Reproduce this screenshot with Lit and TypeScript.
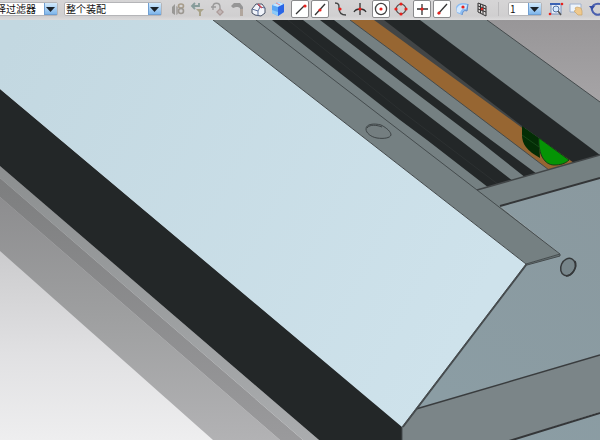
import { LitElement, html, css, svg, SVGTemplateResult } from "lit";
import { customElement } from "lit/decorators.js";
import { classMap } from "lit/directives/class-map.js";

interface Tool {
  label: string;
  pressed?: boolean;
  muted?: boolean;
  art: SVGTemplateResult;
}

const dot = (x: number, y: number, r = 1.6) =>
  svg`<circle cx=${x} cy=${y} r=${r} fill="#e8201c"/>`;

const assemblyTools: Tool[] = [
  { label: "装配约束", muted: true, art: svg`<path d="M3 7l3-3v11l-3-2z" fill="#8b8b88"/><path d="M7 6l2 1v7l-2 1z" fill="#a3a19e"/><ellipse cx="12" cy="6" rx="2.500" ry="2" fill="none" stroke="#9c8f78" stroke-width="1.6"/><ellipse cx="12" cy="11" rx="2.500" ry="2.500" fill="none" stroke="#8f8a82" stroke-width="1.6"/>` },
  { label: "返回过滤", muted: true, art: svg`<path d="M10 3v3H4M6 3L3 6l3 3" fill="none" stroke="#748f8d" stroke-width="1.8"/><path d="M7 9h8l-3 3v4h-2v-4z" fill="#a09878"/>` },
  { label: "移动组件", muted: true, art: svg`<path d="M4 7c0-5 7-5 7 0v2M2 7h5M4 5v5" fill="none" stroke="#8c8c8c" stroke-width="1.3"/><path d="M11 8l4 4-4 4-4-4z" fill="#a48f8d"/><path d="M11 10v4M9 12h4" stroke="#c9bfbe"/>` },
  { label: "装配工具", muted: true, art: svg`<path d="M2 6l3-3h6l3 4v4h-3V8L9 7H7L4 8z" fill="#878787"/><path d="M11 9h3v7h-3z" fill="#aa9c91"/>` },
  { label: "线框显示", art: svg`<path d="M3 9l4-5h6l3 4v5l-4 3-6-1-3-2z" fill="#f1f4fa" stroke="#465064"/><path d="M3 9l6 2v5M9 11l2-4 5 1M11 7L8 4" fill="none" stroke="#5c6e98"/><path d="M9 4l4 4" stroke="#d74b54" stroke-width="1.3"/>` },
  { label: "着色显示", art: svg`<path d="M3 5l7-3 5 2v8l-6 4-6-3z" fill="#5ba6f4"/><path d="M3 5l7-3 5 2-6 3z" fill="#c4e6ff"/><path d="M9 7l6-3v8l-6 4z" fill="#2b66e6"/><path d="M3 10l6 2v4l-6-3z" fill="#8ccaf8"/><path d="M7 3l4 2" stroke="#e08793"/>` },
];

const snapTools: Tool[] = [
  { label: "端点", pressed: true, art: svg`<path d="M5 14L13 6" stroke="#333" stroke-width="1.3"/>${dot(14, 6)}` },
  { label: "中点", pressed: true, art: svg`<path d="M4 15L14 4" stroke="#333" stroke-width="1.3"/>${dot(9, 10)}` },
  { label: "控制点", art: svg`<path d="M4 3C8 3 8 5 8 8C8 13 10 15 15 15" fill="none" stroke="#444" stroke-width="1.4"/>${dot(9, 9)}` },
  { label: "交点", art: svg`<path d="M3 12C5 8 13 8 15 12M9 3v12" fill="none" stroke="#333" stroke-width="1.3"/>${dot(9, 9)}` },
];

const arcTools: Tool[] = [
  { label: "圆弧中心", pressed: true, art: svg`<circle cx="9" cy="9" r="5.6" fill="none" stroke="#444" stroke-width="1.3"/>${dot(9, 9)}` },
  { label: "象限点", art: svg`<circle cx="9" cy="9" r="4.8" fill="none" stroke="#555" stroke-width="1.3"/>${dot(9, 4)}${dot(9, 14)}${dot(4, 9)}${dot(14, 9)}` },
];

const pointTools: Tool[] = [
  { label: "现有点", pressed: true, art: svg`<path d="M9 4v11M4 9h11" stroke="#333" stroke-width="1.3"/>${dot(9, 9)}` },
  { label: "曲线上的点", pressed: true, art: svg`<path d="M5 14L14 4" stroke="#333" stroke-width="1.3"/>${dot(6, 13)}` },
  { label: "面上的点", art: svg`<path d="M3 7c2-4 7-5 12-3l-1 7c-3-1-4 0-5 4l-5-2z" fill="#8dbdf2"/><path d="M4 8c2-4 6-4 10-3l-1 4c-4-1-5 1-6 4l-3-1z" fill="#d3e8fe"/><path d="M9 15c1-4 2-5 5-4l1-7" fill="none" stroke="#5b88c8"/>${dot(10, 7)}` },
  { label: "小平面顶点", art: svg`<path d="M5 3l8 3v10l-8-4z" fill="#d9d5d5" stroke="#333"/><path d="M7.500 4v9M10 5v9M5 6l8 3M5 9l8 3" stroke="#333"/>${dot(9, 9, 1.2)}` },
];

const viewTools: Tool[] = [
  { label: "缩放区域", art: svg`<path d="M4 4h10v10H4z" fill="#e6ecf6" stroke="#7d93bb"/><path d="M3 4h10" stroke="#3a62b4" stroke-width="2"/><circle cx="9" cy="9" r="3" fill="#d8eaff" stroke="#5675a6"/><path d="M11 11l3 4" stroke="#555" stroke-width="1.5"/>${dot(3, 14, 1.3)}${dot(15, 4, 1.3)}` },
  { label: "平移", art: svg`<path d="M3 4h11v8H3z" fill="#edf3fb" stroke="#a0b2ce"/><path d="M8 8l2-1 4 1 1 3v4h-4l-4-4 2-1z" fill="#f0c98c" stroke="#c9a56c" stroke-width=".7"/>` },
  { label: "旋转", art: svg`<path d="M13 4C8 3 4 6 5 10s5 6 9 4" fill="none" stroke="#4a5fae" stroke-width="2"/><path d="M2 6l6 0-3 4z" fill="#344ca5"/>` },
];

@customElement("filter-select")
class FilterSelect extends LitElement {
  static properties = { label: {}, options: { type: Array } };
  declare label: string;
  declare options: string[];

  static styles = css`
    :host { display: block; }
    .box { display: grid; height: 14px; background: #fff; border: 1px solid #b5b5b8; border-radius: 2px; box-sizing: border-box; }
    .field {
      grid-area: 1 / 1; appearance: none; width: 100%; height: 12px; border: 0; padding: 0 14px 0 1px; margin: 0;
      background: transparent; color: #111; font: 10px/12px "Noto Sans CJK SC", sans-serif;
    }
    .arrow { grid-area: 1 / 1; justify-self: end; width: 13px; height: 12px; pointer-events: none; }
  `;

  render() {
    return html`<div class="box">
      <select class="field" aria-label=${this.label}>
        ${this.options.map((o) => html`<option>${o}</option>`)}
      </select>
      <svg class="arrow" viewBox="0 0 13 12" aria-hidden="true">
        <defs><linearGradient id="g" x2="0" y2="1"><stop stop-color="#d3eafc"/><stop offset="1" stop-color="#78b2ea"/></linearGradient></defs>
        <rect width="13" height="12" rx="1" fill="url(#g)"/>
        <path d="M.5 12V0M0 11.500h13" stroke="#6f9fd3"/>
        <path d="M2 4h9L6.500 9z" fill="#1b2128"/>
      </svg>
    </div>`;
  }
}

@customElement("tool-group")
class ToolGroup extends LitElement {
  static properties = { tools: { attribute: false } };
  declare tools: Tool[];

  static styles = css`
    :host { display: flex; gap: 2px; }
    .tool { flex: none; width: 18px; height: 18px; padding: 0; border: 1px solid transparent; border-radius: 2px; background: none; }
    .pressed { background: #fff; border-color: #8a8a8c; }
    .muted { opacity: 0.8; }
    .icon { display: block; width: 16px; height: 16px; }
  `;

  render() {
    return this.tools.map((t) => html`
      <button class=${classMap({ tool: true, pressed: !!t.pressed, muted: !!t.muted })} ?disabled=${!!t.muted}
        aria-label=${t.label} aria-pressed=${t.pressed ? "true" : "false"}>
        <svg class="icon" viewBox="1 1 16 16" aria-hidden="true">${t.art}</svg>
      </button>`);
  }
}

@customElement("model-view")
class ModelView extends LitElement {
  static styles = css`
    :host { display: flex; min-height: 0; }
    .scene { flex: 1; width: 100%; height: 100%; min-height: 0; display: block; }
    .edge { fill: none; stroke: #454b4d; stroke-width: 1; }
    .heavy { fill: none; stroke: #343638; stroke-width: 2; }
    .steel { fill: #758082; }
    .dark { fill: #232728; }
    .side { fill: url(#side); }
  `;

  render() {
    return html`<svg class="scene" viewBox="0 20 600 420" preserveAspectRatio="xMinYMin slice" role="img" aria-label="装配模型">
      <defs>
        <linearGradient id="bg" gradientUnits="userSpaceOnUse" x1="0" y1="20" x2="0" y2="440">
          <stop stop-color="#989698"/><stop offset=".25" stop-color="#aaa8aa"/><stop offset=".55" stop-color="#cbcbcd"/><stop offset=".8" stop-color="#e1e1e3"/><stop offset="1" stop-color="#eeeeef"/>
        </linearGradient>
        <linearGradient id="shadow" gradientUnits="userSpaceOnUse" x1="0" y1="190" x2="0" y2="440">
          <stop stop-color="#8c8c8e"/><stop offset=".5" stop-color="#9e9fa0"/><stop offset="1" stop-color="#b2b2b4"/>
        </linearGradient>
        <linearGradient id="groove" gradientUnits="userSpaceOnUse" x1="0" y1="178" x2="0" y2="440">
          <stop stop-color="#7d7e7f"/><stop offset="1" stop-color="#9a9a9c"/>
        </linearGradient>
        <linearGradient id="lip" gradientUnits="userSpaceOnUse" x1="0" y1="166" x2="0" y2="440">
          <stop stop-color="#8c8f90"/><stop offset="1" stop-color="#aaacae"/>
        </linearGradient>
        <linearGradient id="face" gradientUnits="userSpaceOnUse" x1="0" y1="60" x2="480" y2="300">
          <stop stop-color="#c3d8e1"/><stop offset="1" stop-color="#cee2eb"/>
        </linearGradient>
        <linearGradient id="side" gradientUnits="userSpaceOnUse" x1="600" y1="180" x2="450" y2="400">
          <stop stop-color="#8a999f"/><stop offset="1" stop-color="#8b9da4"/>
        </linearGradient>
      </defs>
      <rect y="20" width="600" height="420" fill="url(#bg)"/>
      <path d="M0 197L280 440H213L0 251z" fill="url(#shadow)"/>
      <path d="M0 178L303 440H280L0 197z" fill="url(#groove)"/>
      <path d="M0 166L319 440H303L0 178z" fill="url(#lip)"/>

      <path class="steel" d="M213 20H487L600 102V178L500 206L560 254L526 264z"/>
      <path class="edge" d="M487 20L600 102"/>
      <path class="dark" d="M272 20H303L400 94L460 140L513 181L489 188L427 140L400 120z"/>
      <path d="M288 20L400 110L499 185" fill="none" stroke="#2c3031"/>
      <path class="dark" d="M320 20H334L400 71L491 140L537 174L526 178L478 140L400 81z"/>
      <path d="M350 20H376L522 127L574 162L549 170L400 57z" fill="#976632"/>
      <path class="edge" d="M350 20L400 57L549 170"/>
      <path d="M374 20H388L525 124V130z" fill="#424546"/>
      <path class="dark" d="M384 20H420L600 155L574 163L522 126z"/>
      <path d="M522 126L539 138L540 158C527 151 522 144 522 135z" fill="#032d05"/>
      <path d="M522 135L539 147" fill="none" stroke="#164818"/>
      <path d="M539 138L569 160C565 164 560 165 554 165C545 165 538 155 539 138z" fill="#059405" stroke="#173c19"/>
      <path class="steel" d="M477 190L600 155V178L500 206z"/>
      <path d="M477 190L600 155" fill="none" stroke="#424648" stroke-width="1.5"/>

      <path class="side" d="M500 206L600 178V355L416 409L526 264L560 254z"/>
      <path d="M416 409L600 355V412L512 440H402V427z" fill="#7b8588"/>
      <path class="side" d="M512 440L600 412V440z"/>
      <path class="heavy" d="M500 206L600 178M509 441L600 413"/>
      <path class="edge" d="M256 20L477 190L560 254"/>
      <path d="M416 409L600 355" fill="none" stroke="#393c3e" stroke-width="1.500"/>

      <path class="dark" d="M0 89L402 426V440H319L0 166z"/>
      <path d="M0 20H213L526 264L402 427L0 89z" fill="url(#face)"/>
      <path class="edge" d="M213 20L526 264L402 427V440"/>
      <path d="M527 264L403 427" fill="none" stroke="#454a4d" stroke-width="1.5"/>
      <path d="M526 264L560 254L560 256L527 265z" fill="#687375" stroke="#454b4d"/>
      <path d="M366 129C366 124 374 123 381 125C387 128 391 132 391 135C390 138 384 139 377 138C371 137 366 133 366 129z" fill="#747e80" stroke="#3e4446"/>
      <path d="M367 128C370 124 377 125 382 127" fill="none" stroke="#3e4446"/>
      <ellipse cx="568" cy="267" rx="7" ry="9" transform="rotate(25 568 267)" fill="#77858a" stroke="#35383a" stroke-width="1.500"/>
      <path d="M575 261C578 267 572 276 566 276" fill="none" stroke="#35383a" stroke-width="1.500"/>
    </svg>`;
  }
}

@customElement("app-root")
class AppRoot extends LitElement {
  static styles = css`
    :host { display: grid; grid-template-rows: auto 1fr; height: 100vh; overflow: hidden; }
    .bar { display: flex; align-items: center; height: 20px; padding-bottom: 2px; box-sizing: border-box; overflow: hidden; background: linear-gradient(#d6d5d6, #d0cfd0 80%, #dcdbdc); }
    .bar > * { flex: none; }
    .type { width: 74px; margin-left: -16px; }
    .scope { width: 98px; margin: 0 7px 0 6px; }
    .snap { margin-left: 4px; }
    .next { margin-left: 3px; }
    .rule { width: 1px; height: 14px; margin: 0 9px 0 7px; background: #bcbbbd; }
    .layer { width: 34px; margin-right: 5px; }
  `;

  render() {
    return html`
      <div class="bar" role="toolbar" aria-label="选择条">
        <filter-select class="type" label="类型过滤器" .options=${["选择过滤器"]}></filter-select>
        <filter-select class="scope" label="选择范围" .options=${["整个装配"]}></filter-select>
        <tool-group .tools=${assemblyTools}></tool-group>
        <tool-group class="snap" .tools=${snapTools}></tool-group>
        <tool-group class="next" .tools=${arcTools}></tool-group>
        <tool-group class="next" .tools=${pointTools}></tool-group>
        <span class="rule"></span>
        <filter-select class="layer" label="工作图层" .options=${["1"]}></filter-select>
        <tool-group .tools=${viewTools}></tool-group>
      </div>
      <model-view></model-view>`;
  }
}
